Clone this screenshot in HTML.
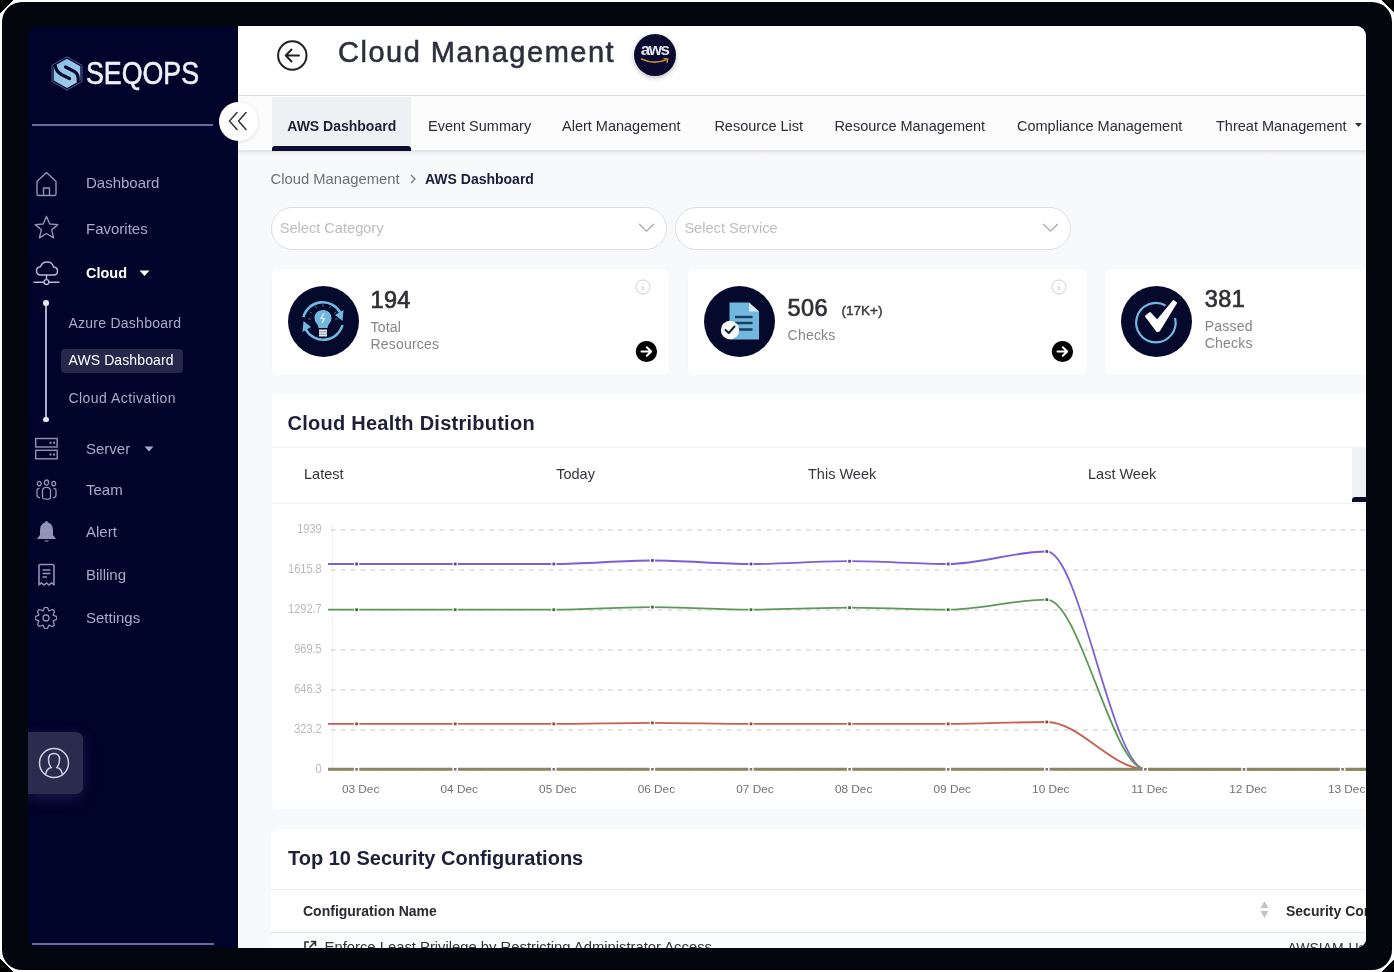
<!DOCTYPE html><html><head><meta charset="utf-8"><style>
*{margin:0;padding:0;box-sizing:border-box}
html,body{width:1394px;height:972px;overflow:hidden;background:#fff;font-family:'Liberation Sans',sans-serif}
.t{position:absolute;white-space:nowrap}
.a{position:absolute}
</style></head><body><div class="a" style="left:0;top:0;width:1394px;height:972px;filter:blur(0.4px)"><div class="a" style="left:0;top:0;width:1394px;height:972px;background:#fff"></div>
<svg class="a" style="left:0px;top:0px" width="14" height="14"><polygon points="0,0 13,0 0,13" fill="#000" shape-rendering="crispEdges"/></svg>
<svg class="a" style="left:1380px;top:0px" width="14" height="14"><polygon points="1,0 14,0 14,13" fill="#000" shape-rendering="crispEdges"/></svg>
<svg class="a" style="left:0px;top:958px" width="14" height="14"><polygon points="0,1 13,14 0,14" fill="#000" shape-rendering="crispEdges"/></svg>
<svg class="a" style="left:1380px;top:958px" width="14" height="14"><polygon points="14,1 14,14 1,14" fill="#000" shape-rendering="crispEdges"/></svg>
<div class="a" style="left:2px;top:2px;width:1390px;height:968px;background:#04060e;border-radius:20px"></div>
<div class="a" id="inner" style="left:28px;top:26px;width:1338px;height:922px;background:#04060e;border-radius:10px;overflow:hidden">
<div class="a" style="left:-28px;top:-26px;width:1394px;height:972px">
<div class="a" style="left:237px;top:26px;width:1129px;height:922px;background:#f8f9fb"></div>
<div class="a" style="left:28px;top:26px;width:210px;height:922px;background:#00032a"></div>
<svg class="a" style="left:51px;top:56px" width="32" height="35" viewBox="0 0 32 35">
<defs><linearGradient id="lg1" x1="0" y1="0" x2="1" y2="1"><stop offset="0" stop-color="#86bfe6"/><stop offset="1" stop-color="#a6cdea"/></linearGradient></defs>
<polygon points="16,0.8 31,9.3 31,25.5 16,34 1,25.5 1,9.3" fill="url(#lg1)" stroke="#03082c" stroke-width="3.4"/><polygon points="16,0.8 31,9.3 31,25.5 16,34 1,25.5 1,9.3" fill="none" stroke="#5a5c98" stroke-width="0.9"/>
<path d="M4.2,9.5 C4.8,14 6.5,16.2 10.5,18.6 L18.5,22.5" fill="none" stroke="#03082c" stroke-width="3.2" stroke-linecap="round"/>
<path d="M14.6,11 L23.5,15.6 C26.8,17.6 27.6,20 27.2,25" fill="none" stroke="#03082c" stroke-width="3.2" stroke-linecap="round"/>
</svg>
<div class="t" style="left:86px;top:58.14px;font-size:31.5px;line-height:31.5px;font-weight:400;color:#eef0fa;letter-spacing:0px;font-family:'Liberation Sans',sans-serif;transform:scaleX(0.85);transform-origin:0 0;-webkit-text-stroke:0.6px #eef0fa;">SEQOPS</div>
<div class="a" style="left:32px;top:123.5px;width:181px;height:2px;background:#6a6b9b"></div>
<div class="t" style="left:86px;top:175.30px;font-size:15px;line-height:15px;font-weight:400;color:#aaabc9;font-family:'Liberation Sans',sans-serif;">Dashboard</div>
<div class="t" style="left:86px;top:221.30px;font-size:15px;line-height:15px;font-weight:400;color:#aaabc9;font-family:'Liberation Sans',sans-serif;">Favorites</div>
<div class="t" style="left:86px;top:266.23px;font-size:14.5px;line-height:14.5px;font-weight:700;color:#ffffff;font-family:'Liberation Sans',sans-serif;">Cloud</div>
<div class="t" style="left:86px;top:441.30px;font-size:15px;line-height:15px;font-weight:400;color:#aaabc9;font-family:'Liberation Sans',sans-serif;">Server</div>
<div class="t" style="left:86px;top:482.30px;font-size:15px;line-height:15px;font-weight:400;color:#aaabc9;font-family:'Liberation Sans',sans-serif;">Team</div>
<div class="t" style="left:86px;top:524.30px;font-size:15px;line-height:15px;font-weight:400;color:#aaabc9;font-family:'Liberation Sans',sans-serif;">Alert</div>
<div class="t" style="left:86px;top:567.30px;font-size:15px;line-height:15px;font-weight:400;color:#aaabc9;font-family:'Liberation Sans',sans-serif;">Billing</div>
<div class="t" style="left:86px;top:609.80px;font-size:15px;line-height:15px;font-weight:400;color:#aaabc9;font-family:'Liberation Sans',sans-serif;">Settings</div>
<svg class="a" style="left:139px;top:270px" width="11" height="7"><polygon points="0.5,0.5 10.5,0.5 5.5,6" fill="#fff"/></svg>
<svg class="a" style="left:144px;top:446px" width="10" height="6"><polygon points="0.5,0.5 9.5,0.5 5,5.5" fill="#aaabc9"/></svg>
<svg class="a" style="left:34px;top:170px" width="26" height="28" viewBox="0 0 26 28" fill="none" stroke="#9293bb" stroke-width="1.4" stroke-linejoin="round">
<path d="M3,11.5 L12.5,2.5 L22,11.5 L22,24 Q22,25.5 20.5,25.5 L4.5,25.5 Q3,25.5 3,24 Z"/><path d="M9.5,25.5 V18 H15.5 V25.5"/></svg>
<svg class="a" style="left:33px;top:215px" width="27" height="26" viewBox="0 0 27 26" fill="none" stroke="#9293bb" stroke-width="1.4" stroke-linejoin="round">
<polygon points="13.5,1.5 16.8,9 24.8,9.6 18.7,14.8 20.6,22.8 13.5,18.5 6.4,22.8 8.3,14.8 2.2,9.6 10.2,9"/></svg>
<svg class="a" style="left:33px;top:260px" width="28" height="28" viewBox="0 0 28 28" fill="none" stroke="#b9bad6" stroke-width="1.4" stroke-linejoin="round">
<path d="M8,15 Q3.5,15 3.5,10.8 Q3.5,7 7.5,6.8 Q9,2 14,2 Q19.5,2 20.5,7 Q24.5,7.2 24.5,11 Q24.5,15 20.5,15 Z"/><path d="M13.5,15 V19.5"/><circle cx="13.5" cy="22" r="2.4"/><path d="M0.5,22.3 H11 M16,22.3 H26.5"/></svg>
<div class="a" style="left:45.3px;top:303px;width:1.5px;height:116px;background:#a9abd0"></div>
<div class="a" style="left:43.3px;top:300px;width:5.5px;height:5.5px;border-radius:50%;background:#e6e6f4"></div>
<div class="a" style="left:43.3px;top:416.5px;width:5.5px;height:5.5px;border-radius:50%;background:#e6e6f4"></div>
<div class="a" style="left:60.5px;top:348.5px;width:122px;height:24.5px;border-radius:4px;background:#25284a"></div>
<div class="t" style="left:68.5px;top:315.65px;font-size:14px;line-height:14px;font-weight:400;color:#aaabc9;letter-spacing:0.25px;font-family:'Liberation Sans',sans-serif;">Azure Dashboard</div>
<div class="t" style="left:68.5px;top:352.65px;font-size:14px;line-height:14px;font-weight:400;color:#ffffff;letter-spacing:0.1px;font-family:'Liberation Sans',sans-serif;">AWS Dashboard</div>
<div class="t" style="left:68.5px;top:390.65px;font-size:14px;line-height:14px;font-weight:400;color:#aaabc9;letter-spacing:0.45px;font-family:'Liberation Sans',sans-serif;">Cloud Activation</div>
<svg class="a" style="left:34px;top:437px" width="25" height="24" viewBox="0 0 25 24" fill="none" stroke="#9293bb" stroke-width="1.4">
<rect x="1.7" y="1.5" width="21.5" height="8.5"/><rect x="1.7" y="13.3" width="21.5" height="8.5"/><path d="M15.5,5.8 h2 M19,5.8 h2 M15.5,17.6 h2 M19,17.6 h2" stroke-width="2"/></svg>
<svg class="a" style="left:35px;top:479px" width="23" height="22" viewBox="0 0 23 22" fill="none" stroke="#9293bb" stroke-width="1.3">
<ellipse cx="11.5" cy="3.6" rx="2.1" ry="2.6"/><ellipse cx="4.3" cy="4.6" rx="1.9" ry="2.3"/><ellipse cx="18.7" cy="4.6" rx="1.9" ry="2.3"/>
<path d="M7.5,18.5 V11.5 Q7.5,8.3 11.5,8.3 Q15.5,8.3 15.5,11.5 V18.5 Q15.5,20.2 11.5,20.2 Q7.5,20.2 7.5,18.5 Z"/><path d="M5,18.8 Q2,18.5 2,16 V11.5 Q2,9.3 4.5,9.3"/><path d="M18,18.8 Q21,18.5 21,16 V11.5 Q21,9.3 18.5,9.3"/></svg>
<svg class="a" style="left:36px;top:520px" width="21" height="23" viewBox="0 0 21 23">
<path d="M10.5,1 Q12,1 12,2.5 Q17,4 17,10 V15 L20,19 H1 L4,15 V10 Q4,4 9,2.5 Q9,1 10.5,1 Z" fill="#9293bb"/><path d="M8,20.5 Q10.5,23 13,20.5 Z" fill="#9293bb"/></svg>
<svg class="a" style="left:37px;top:563px" width="19" height="24" viewBox="0 0 19 24" fill="none" stroke="#9293bb" stroke-width="1.6">
<path d="M2,3 Q2,1.5 3.5,1.5 H15.5 Q17,1.5 17,3 V21.5 L14.5,20 L12,22 L9.5,20 L7,22 L4.5,20 L2,21.5 Z"/><path d="M5.5,7 H13.5 M5.5,10.5 H13.5 M5.5,14 H10" stroke-width="1.4"/></svg>
<svg class="a" style="left:35px;top:606.5px" width="22" height="22" viewBox="0 0 22 22" fill="none" stroke="#9293bb" stroke-width="1.3" stroke-linejoin="round">
<path d="M18.11,8.05 L21.72,9.68 L21.72,12.32 L18.11,13.95 L19.51,17.65 L17.65,19.51 L13.95,18.11 L12.32,21.72 L9.68,21.72 L8.05,18.11 L4.35,19.51 L2.49,17.65 L3.89,13.95 L0.28,12.32 L0.28,9.68 L3.89,8.05 L2.49,4.35 L4.35,2.49 L8.05,3.89 L9.68,0.28 L12.32,0.28 L13.95,3.89 L17.65,2.49 L19.51,4.35 Z"/><circle cx="11" cy="11" r="3"/></svg>
<div class="a" style="left:28px;top:732px;width:55px;height:62px;border-radius:0 7px 7px 0;background:#2a2c4d;box-shadow:0 4px 14px rgba(70,72,130,0.35)"></div>
<svg class="a" style="left:38px;top:747px" width="32" height="32" viewBox="0 0 32 32" fill="none" stroke="#d0d1e6" stroke-width="1.5">
<circle cx="16" cy="16" r="14.5"/><path d="M7.5,27.5 Q8.5,21.5 13,20.5 Q10.5,17.5 10.5,12.5 Q10.5,6.5 16,6.5 Q21.5,6.5 21.5,12.5 Q21.5,17.5 19,20.5 Q23.5,21.5 24.5,27.5"/></svg>
<div class="a" style="left:32px;top:943px;width:182px;height:2px;background:#6a6b9b"></div>
<div class="a" style="left:238px;top:26px;width:1128px;height:69px;background:#ffffff"></div>
<div class="a" style="left:238px;top:94.5px;width:1128px;height:1px;background:#d9d9dc"></div>
<div class="a" style="left:238px;top:95.5px;width:1128px;height:55px;background:#fcfcfd"></div>
<div class="a" style="left:238px;top:150px;width:1128px;height:1.5px;background:#e4e4e9"></div>
<div class="a" style="left:238px;top:151.5px;width:1128px;height:4px;background:linear-gradient(#eeeef2,#f8f9fb)"></div>
<svg class="a" style="left:276px;top:39px" width="33" height="33" viewBox="0 0 33 33" fill="none" stroke="#222" stroke-width="2" stroke-linecap="round" stroke-linejoin="round">
<circle cx="16.3" cy="16.5" r="14.2"/><path d="M10,16.5 H23 M15.5,10.5 L9.8,16.5 L15.5,22.5"/></svg>
<div class="t" style="left:338px;top:37.85px;font-size:29px;line-height:29px;font-weight:400;color:#2c2f3c;letter-spacing:1.5px;font-family:'Liberation Sans',sans-serif;-webkit-text-stroke:0.55px #2c2f3c;">Cloud Management</div>
<div class="a" style="left:633.5px;top:34.3px;width:42px;height:42px;border-radius:50%;background:#0a0b2e;box-shadow:0 2px 5px rgba(0,0,0,0.25)"></div>
<div class="t" style="left:654.6px;transform:translateX(-50%);top:41.41px;font-size:17px;line-height:17px;font-weight:700;color:#e4e6f2;letter-spacing:-1.5px;font-family:'Liberation Sans',sans-serif;">aws</div>
<svg class="a" style="left:640px;top:56px" width="30" height="10" viewBox="0 0 30 10" fill="none">
<path d="M1.5,3 Q14,9 27,3.5" stroke="#c08a3a" stroke-width="1.6" stroke-linecap="round"/><path d="M24,2.5 L27.8,3 L27,6.5" stroke="#c08a3a" stroke-width="1.4" stroke-linecap="round"/></svg>
<div class="a" style="left:272px;top:97px;width:139px;height:50px;background:#eff0f3"></div>
<div class="a" style="left:272px;top:146px;width:139px;height:5px;background:#0b0c2e;border-radius:3px 3px 0 0"></div>
<div class="t" style="left:287.3px;top:119.35px;font-size:14px;line-height:14px;font-weight:700;color:#1e2038;font-family:'Liberation Sans',sans-serif;">AWS Dashboard</div>
<div class="t" style="left:428px;top:118.93px;font-size:14.5px;line-height:14.5px;font-weight:400;color:#2c2c34;font-family:'Liberation Sans',sans-serif;">Event Summary</div>
<div class="t" style="left:562px;top:118.93px;font-size:14.5px;line-height:14.5px;font-weight:400;color:#2c2c34;font-family:'Liberation Sans',sans-serif;">Alert Management</div>
<div class="t" style="left:714.4px;top:118.93px;font-size:14.5px;line-height:14.5px;font-weight:400;color:#2c2c34;font-family:'Liberation Sans',sans-serif;">Resource List</div>
<div class="t" style="left:834.4px;top:118.93px;font-size:14.5px;line-height:14.5px;font-weight:400;color:#2c2c34;font-family:'Liberation Sans',sans-serif;">Resource Management</div>
<div class="t" style="left:1017px;top:118.93px;font-size:14.5px;line-height:14.5px;font-weight:400;color:#2c2c34;font-family:'Liberation Sans',sans-serif;">Compliance Management</div>
<div class="t" style="left:1216px;top:118.93px;font-size:14.5px;line-height:14.5px;font-weight:400;color:#2c2c34;font-family:'Liberation Sans',sans-serif;">Threat Management</div>
<svg class="a" style="left:1355px;top:123px" width="8" height="5"><polygon points="0,0 7,0 3.5,4" fill="#333"/></svg>
<div class="a" style="left:218.5px;top:101.5px;width:39px;height:39px;border-radius:50%;background:#fff;box-shadow:0 1px 4px rgba(0,0,0,0.12)"></div>
<svg class="a" style="left:226px;top:110px" width="24" height="22" viewBox="0 0 24 22" fill="none" stroke="#333" stroke-width="1.5" stroke-linecap="round" stroke-linejoin="round">
<path d="M11,2.5 L3.5,11 L11,19.5 M20,2.5 L12.5,11 L20,19.5"/></svg>
<div class="t" style="left:270.5px;top:171.67px;font-size:14.8px;line-height:14.8px;font-weight:400;color:#6e6e73;font-family:'Liberation Sans',sans-serif;">Cloud Management</div>
<svg class="a" style="left:408px;top:173px" width="10" height="12" viewBox="0 0 10 12" fill="none" stroke="#777" stroke-width="1.3"><path d="M3,2 L7,6 L3,10"/></svg>
<div class="t" style="left:425px;top:172.35px;font-size:14px;line-height:14px;font-weight:700;color:#1a1c38;font-family:'Liberation Sans',sans-serif;">AWS Dashboard</div>
<div class="a" style="left:270.5px;top:206.5px;width:396.5px;height:43.5px;border-radius:22px;background:#fff;border:1.4px solid #dcdcdf"></div>
<div class="t" style="left:279.7px;top:220.94px;font-size:14.6px;line-height:14.6px;font-weight:400;color:#bdbdc2;font-family:'Liberation Sans',sans-serif;">Select Category</div>
<svg class="a" style="left:637.5px;top:222px" width="17" height="12" viewBox="0 0 17 12" fill="none" stroke="#a9a9ae" stroke-width="1.3" stroke-linecap="round"><path d="M1.5,2.2 L8.5,9.2 L15.5,2.2"/></svg>
<div class="a" style="left:675.2px;top:206.5px;width:395.5px;height:43.5px;border-radius:22px;background:#fff;border:1.4px solid #dcdcdf"></div>
<div class="t" style="left:684.4000000000001px;top:220.94px;font-size:14.6px;line-height:14.6px;font-weight:400;color:#bdbdc2;font-family:'Liberation Sans',sans-serif;">Select Service</div>
<svg class="a" style="left:1042px;top:222px" width="17" height="12" viewBox="0 0 17 12" fill="none" stroke="#a9a9ae" stroke-width="1.3" stroke-linecap="round"><path d="M1.5,2.2 L8.5,9.2 L15.5,2.2"/></svg>
<div class="a" style="left:271.6px;top:268.5px;width:397.7px;height:106px;border-radius:6px;background:#fff;box-shadow:0 0 2px rgba(0,0,0,0.03)"></div>
<div class="a" style="left:688.4px;top:268.5px;width:398.3px;height:106px;border-radius:6px;background:#fff;box-shadow:0 0 2px rgba(0,0,0,0.03)"></div>
<div class="a" style="left:1104.7px;top:268.5px;width:400px;height:106px;border-radius:6px;background:#fff;box-shadow:0 0 2px rgba(0,0,0,0.03)"></div>
<div class="a" style="left:287.5px;top:285.5px;width:71px;height:71px;border-radius:50%;background:#050a2c"></div>
<div class="a" style="left:703.5px;top:285.5px;width:71px;height:71px;border-radius:50%;background:#050a2c"></div>
<div class="a" style="left:1120.9px;top:285.5px;width:71px;height:71px;border-radius:50%;background:#050a2c"></div>
<svg class="a" style="left:293px;top:291px" width="60" height="60" viewBox="0 0 60 60" fill="none">
<path d="M10.5,26 A20,20 0 0 1 47.5,22" stroke="#72b8de" stroke-width="2.6"/>
<polygon points="50.5,19 49.5,30 42,24" fill="#72b8de"/>
<path d="M49.5,34 A20,20 0 0 1 12.5,38" stroke="#72b8de" stroke-width="2.6"/>
<polygon points="9.5,41 10.5,30 18,36" fill="#72b8de"/>
<path d="M30,19 C24.5,19 21.5,23 21.5,27 C21.5,30.5 23.5,32 25,34.5 L25.5,37 H34.5 L35,34.5 C36.5,32 38.5,30.5 38.5,27 C38.5,23 35.5,19 30,19 Z" fill="#72b8de"/>
<path d="M31,22.5 L28,27.5 H31.5 L29,32" stroke="#e6f4fb" stroke-width="1.2"/>
<rect x="26" y="38.5" width="8" height="7" fill="#e8e8ee"/><path d="M26,40.8 H34 M26,43.2 H34" stroke="#7a7a8a" stroke-width="0.8"/>
<g stroke="#7fa9c8" stroke-width="1" stroke-linecap="round" opacity="0.6"><path d="M30,13.5 V15.5 M22.5,15.5 L23.5,17 M37.5,15.5 L36.5,17 M17,21 L18.5,22 M43,21 L41.5,22 M15.5,28 H17.5 M44.5,28 H42.5"/></g>
</svg>
<svg class="a" style="left:709px;top:291px" width="60" height="60" viewBox="0 0 60 60" fill="none">
<path d="M20.5,11.5 H40 L50,20.5 V48.5 H20.5 Z" fill="#72b8de"/>
<path d="M40,11.5 L50,20.5 H40 Z" fill="#d7ecf7"/>
<path d="M26,26 H43.5 M26,32 H43.5 M26,38.5 H43.5" stroke="#1b3d5e" stroke-width="2.6"/>
<circle cx="21" cy="39" r="9.2" fill="#fbfbfd"/>
<path d="M16.5,39 L19.8,42 L25.5,35.5" stroke="#222" stroke-width="2" stroke-linecap="round" stroke-linejoin="round"/>
</svg>
<svg class="a" style="left:1126.4px;top:291px" width="60" height="60" viewBox="0 0 60 60" fill="none">
<path d="M39.5,14.5 A19.7,19.7 0 1 0 49,27" stroke="#72b8de" stroke-width="2.2"/>
<path d="M19.8,25.2 L24,21.8 L31.2,29.5 L47.5,9.8 L50.3,11.8 L33.2,39.8 L31,40.2 Z" fill="#fff" stroke="#fff" stroke-width="1.5" stroke-linejoin="round"/>
</svg>
<div class="t" style="left:370.5px;top:288.91px;font-size:23.5px;line-height:23.5px;font-weight:400;color:#2f3036;letter-spacing:0.35px;font-family:'Liberation Sans',sans-serif;-webkit-text-stroke:0.7px #2f3036;">194</div>
<div class="t" style="left:370.5px;top:319.55px;font-size:14px;line-height:14px;font-weight:400;color:#85858b;letter-spacing:0.2px;font-family:'Liberation Sans',sans-serif;">Total</div>
<div class="t" style="left:370.5px;top:337.05px;font-size:14px;line-height:14px;font-weight:400;color:#85858b;letter-spacing:0.2px;font-family:'Liberation Sans',sans-serif;">Resources</div>
<div class="t" style="left:787.6px;top:297.01px;font-size:23.5px;line-height:23.5px;font-weight:400;color:#2f3036;letter-spacing:0.35px;font-family:'Liberation Sans',sans-serif;-webkit-text-stroke:0.7px #2f3036;">506</div>
<div class="t" style="left:841.5px;top:304.27px;font-size:13.5px;line-height:13.5px;font-weight:400;color:#3a3a3f;font-family:'Liberation Sans',sans-serif;-webkit-text-stroke:0.45px #3a3a3f;">(17K+)</div>
<div class="t" style="left:787.6px;top:327.95px;font-size:14px;line-height:14px;font-weight:400;color:#85858b;letter-spacing:0.2px;font-family:'Liberation Sans',sans-serif;">Checks</div>
<div class="t" style="left:1204.8px;top:287.91px;font-size:23.5px;line-height:23.5px;font-weight:400;color:#2f3036;letter-spacing:0.35px;font-family:'Liberation Sans',sans-serif;-webkit-text-stroke:0.7px #2f3036;">381</div>
<div class="t" style="left:1204.8px;top:318.95px;font-size:14px;line-height:14px;font-weight:400;color:#85858b;letter-spacing:0.2px;font-family:'Liberation Sans',sans-serif;">Passed</div>
<div class="t" style="left:1204.8px;top:336.35px;font-size:14px;line-height:14px;font-weight:400;color:#85858b;letter-spacing:0.2px;font-family:'Liberation Sans',sans-serif;">Checks</div>
<svg class="a" style="left:634.5px;top:278.7px" width="16" height="16" viewBox="0 0 16 16" fill="none" stroke="#cfcfd3" stroke-width="1"><circle cx="8" cy="8" r="7"/><path d="M8,7 V11.5 M8,4.5 V5.5" stroke-width="1.3"/></svg>
<svg class="a" style="left:635px;top:339.7px" width="23" height="23" viewBox="0 0 23 23"><circle cx="11.5" cy="11.5" r="10.6" fill="#000"/>
<path d="M6.5,11.5 H16 M11.8,7.2 L16.2,11.5 L11.8,15.8" fill="none" stroke="#fff" stroke-width="2" stroke-linecap="round" stroke-linejoin="round"/></svg>
<svg class="a" style="left:1050.5px;top:278.7px" width="16" height="16" viewBox="0 0 16 16" fill="none" stroke="#cfcfd3" stroke-width="1"><circle cx="8" cy="8" r="7"/><path d="M8,7 V11.5 M8,4.5 V5.5" stroke-width="1.3"/></svg>
<svg class="a" style="left:1051.4px;top:339.7px" width="23" height="23" viewBox="0 0 23 23"><circle cx="11.5" cy="11.5" r="10.6" fill="#000"/>
<path d="M6.5,11.5 H16 M11.8,7.2 L16.2,11.5 L11.8,15.8" fill="none" stroke="#fff" stroke-width="2" stroke-linecap="round" stroke-linejoin="round"/></svg>
<div class="a" style="left:272px;top:394.4px;width:1200px;height:414.6px;border-radius:6px;background:#fff"></div>
<div class="t" style="left:287.5px;top:413.27px;font-size:20px;line-height:20px;font-weight:700;color:#1d2038;letter-spacing:0.25px;font-family:'Liberation Sans',sans-serif;">Cloud Health Distribution</div>
<div class="a" style="left:272px;top:446.5px;width:1100px;height:1px;background:#f0f0f2"></div>
<div class="a" style="left:272px;top:502.8px;width:1100px;height:1px;background:#f0f0f2"></div>
<div class="a" style="left:1351.6px;top:448px;width:40px;height:48.5px;background:#f0f1f5"></div>
<div class="a" style="left:1351.6px;top:496.5px;width:40px;height:5px;background:#0b0c2e;border-radius:3px 0 0 0"></div>
<div class="t" style="left:304px;top:467.13px;font-size:14.5px;line-height:14.5px;font-weight:400;color:#34343c;font-family:'Liberation Sans',sans-serif;">Latest</div>
<div class="t" style="left:556.2px;top:467.13px;font-size:14.5px;line-height:14.5px;font-weight:400;color:#34343c;font-family:'Liberation Sans',sans-serif;">Today</div>
<div class="t" style="left:808px;top:467.13px;font-size:14.5px;line-height:14.5px;font-weight:400;color:#34343c;font-family:'Liberation Sans',sans-serif;">This Week</div>
<div class="t" style="left:1088px;top:467.13px;font-size:14.5px;line-height:14.5px;font-weight:400;color:#34343c;font-family:'Liberation Sans',sans-serif;">Last Week</div>
<svg class="a" style="left:0;top:0" width="1394" height="972" viewBox="0 0 1394 972" fill="none"><path d="M332.5,524 V770" stroke="#f1f1f8" stroke-width="1"/><path d="M326,530.0 H1394" stroke="#c6c6ca" stroke-width="1" stroke-dasharray="4.6,5.3" stroke-dashoffset="5"/><path d="M326,570.0 H1394" stroke="#c6c6ca" stroke-width="1" stroke-dasharray="4.6,5.3" stroke-dashoffset="5"/><path d="M326,610.0 H1394" stroke="#c6c6ca" stroke-width="1" stroke-dasharray="4.6,5.3" stroke-dashoffset="5"/><path d="M326,650.0 H1394" stroke="#c6c6ca" stroke-width="1" stroke-dasharray="4.6,5.3" stroke-dashoffset="5"/><path d="M326,690.0 H1394" stroke="#c6c6ca" stroke-width="1" stroke-dasharray="4.6,5.3" stroke-dashoffset="5"/><path d="M326,730.0 H1394" stroke="#c6c6ca" stroke-width="1" stroke-dasharray="4.6,5.3" stroke-dashoffset="5"/><path d="M326,770.0 H1394" stroke="#c6c6ca" stroke-width="1" stroke-dasharray="4.6,5.3" stroke-dashoffset="5"/><path d="M328,564.00 L356.60,564.00 C389.47,564.00 422.33,564.00 455.20,564.00 C488.07,564.00 520.93,564.00 553.80,564.00 C586.67,564.00 619.53,560.50 652.40,560.50 C685.27,560.50 718.13,564.00 751.00,564.00 C783.87,564.00 816.73,561.20 849.60,561.20 C882.47,561.20 915.33,564.00 948.20,564.00 C981.07,564.00 1013.93,551.50 1046.80,551.50 C1079.67,551.50 1112.53,769.30 1145.40,769.30 C1178.27,769.30 1211.13,769.30 1244.00,769.30 C1276.87,769.30 1309.73,769.30 1342.60,769.30 L1400,769.30" stroke="#7c5fd6" stroke-width="1.8"/><rect x="354.60" y="562.00" width="4" height="4" fill="#5a42a8" stroke="#fff" stroke-width="1.2"/><rect x="453.20" y="562.00" width="4" height="4" fill="#5a42a8" stroke="#fff" stroke-width="1.2"/><rect x="551.80" y="562.00" width="4" height="4" fill="#5a42a8" stroke="#fff" stroke-width="1.2"/><rect x="650.40" y="558.50" width="4" height="4" fill="#5a42a8" stroke="#fff" stroke-width="1.2"/><rect x="749.00" y="562.00" width="4" height="4" fill="#5a42a8" stroke="#fff" stroke-width="1.2"/><rect x="847.60" y="559.20" width="4" height="4" fill="#5a42a8" stroke="#fff" stroke-width="1.2"/><rect x="946.20" y="562.00" width="4" height="4" fill="#5a42a8" stroke="#fff" stroke-width="1.2"/><rect x="1044.80" y="549.50" width="4" height="4" fill="#5a42a8" stroke="#fff" stroke-width="1.2"/><path d="M328,609.70 L356.60,609.70 C389.47,609.70 422.33,609.70 455.20,609.70 C488.07,609.70 520.93,609.70 553.80,609.70 C586.67,609.70 619.53,607.10 652.40,607.10 C685.27,607.10 718.13,609.70 751.00,609.70 C783.87,609.70 816.73,607.70 849.60,607.70 C882.47,607.70 915.33,609.70 948.20,609.70 C981.07,609.70 1013.93,599.60 1046.80,599.60 C1079.67,599.60 1112.53,769.30 1145.40,769.30 C1178.27,769.30 1211.13,769.30 1244.00,769.30 C1276.87,769.30 1309.73,769.30 1342.60,769.30 L1400,769.30" stroke="#5b9a55" stroke-width="1.8"/><rect x="354.60" y="607.70" width="4" height="4" fill="#3a6e38" stroke="#fff" stroke-width="1.2"/><rect x="453.20" y="607.70" width="4" height="4" fill="#3a6e38" stroke="#fff" stroke-width="1.2"/><rect x="551.80" y="607.70" width="4" height="4" fill="#3a6e38" stroke="#fff" stroke-width="1.2"/><rect x="650.40" y="605.10" width="4" height="4" fill="#3a6e38" stroke="#fff" stroke-width="1.2"/><rect x="749.00" y="607.70" width="4" height="4" fill="#3a6e38" stroke="#fff" stroke-width="1.2"/><rect x="847.60" y="605.70" width="4" height="4" fill="#3a6e38" stroke="#fff" stroke-width="1.2"/><rect x="946.20" y="607.70" width="4" height="4" fill="#3a6e38" stroke="#fff" stroke-width="1.2"/><rect x="1044.80" y="597.60" width="4" height="4" fill="#3a6e38" stroke="#fff" stroke-width="1.2"/><path d="M328,723.90 L356.60,723.90 C389.47,723.90 422.33,723.90 455.20,723.90 C488.07,723.90 520.93,723.90 553.80,723.90 C586.67,723.90 619.53,722.90 652.40,722.90 C685.27,722.90 718.13,723.90 751.00,723.90 C783.87,723.90 816.73,723.90 849.60,723.90 C882.47,723.90 915.33,723.90 948.20,723.90 C981.07,723.90 1013.93,722.00 1046.80,722.00 C1079.67,722.00 1112.53,769.30 1145.40,769.30 C1178.27,769.30 1211.13,769.30 1244.00,769.30 C1276.87,769.30 1309.73,769.30 1342.60,769.30 L1400,769.30" stroke="#c8604f" stroke-width="1.8"/><rect x="354.60" y="721.90" width="4" height="4" fill="#9a4436" stroke="#fff" stroke-width="1.2"/><rect x="453.20" y="721.90" width="4" height="4" fill="#9a4436" stroke="#fff" stroke-width="1.2"/><rect x="551.80" y="721.90" width="4" height="4" fill="#9a4436" stroke="#fff" stroke-width="1.2"/><rect x="650.40" y="720.90" width="4" height="4" fill="#9a4436" stroke="#fff" stroke-width="1.2"/><rect x="749.00" y="721.90" width="4" height="4" fill="#9a4436" stroke="#fff" stroke-width="1.2"/><rect x="847.60" y="721.90" width="4" height="4" fill="#9a4436" stroke="#fff" stroke-width="1.2"/><rect x="946.20" y="721.90" width="4" height="4" fill="#9a4436" stroke="#fff" stroke-width="1.2"/><rect x="1044.80" y="720.00" width="4" height="4" fill="#9a4436" stroke="#fff" stroke-width="1.2"/><path d="M328,769.3 H1394" stroke="#8a8660" stroke-width="3"/><rect x="354.60" y="767.30" width="4" height="4" fill="#77776a" stroke="#fff" stroke-width="1.4"/><rect x="453.20" y="767.30" width="4" height="4" fill="#77776a" stroke="#fff" stroke-width="1.4"/><rect x="551.80" y="767.30" width="4" height="4" fill="#77776a" stroke="#fff" stroke-width="1.4"/><rect x="650.40" y="767.30" width="4" height="4" fill="#77776a" stroke="#fff" stroke-width="1.4"/><rect x="749.00" y="767.30" width="4" height="4" fill="#77776a" stroke="#fff" stroke-width="1.4"/><rect x="847.60" y="767.30" width="4" height="4" fill="#77776a" stroke="#fff" stroke-width="1.4"/><rect x="946.20" y="767.30" width="4" height="4" fill="#77776a" stroke="#fff" stroke-width="1.4"/><rect x="1044.80" y="767.30" width="4" height="4" fill="#77776a" stroke="#fff" stroke-width="1.4"/><rect x="1143.40" y="767.30" width="4" height="4" fill="#77776a" stroke="#fff" stroke-width="1.4"/><rect x="1242.00" y="767.30" width="4" height="4" fill="#77776a" stroke="#fff" stroke-width="1.4"/><rect x="1340.60" y="767.30" width="4" height="4" fill="#77776a" stroke="#fff" stroke-width="1.4"/></svg>
<div class="t" style="right:1072.3px;top:524.29px;font-size:11px;line-height:11px;font-weight:400;color:#b9b9be;font-family:'Liberation Sans',sans-serif;transform:scaleY(1.12);transform-origin:0 80%;">1939</div>
<div class="t" style="right:1072.3px;top:564.29px;font-size:11px;line-height:11px;font-weight:400;color:#b9b9be;font-family:'Liberation Sans',sans-serif;transform:scaleY(1.12);transform-origin:0 80%;">1615.8</div>
<div class="t" style="right:1072.3px;top:604.29px;font-size:11px;line-height:11px;font-weight:400;color:#b9b9be;font-family:'Liberation Sans',sans-serif;transform:scaleY(1.12);transform-origin:0 80%;">1292.7</div>
<div class="t" style="right:1072.3px;top:644.29px;font-size:11px;line-height:11px;font-weight:400;color:#b9b9be;font-family:'Liberation Sans',sans-serif;transform:scaleY(1.12);transform-origin:0 80%;">969.5</div>
<div class="t" style="right:1072.3px;top:684.29px;font-size:11px;line-height:11px;font-weight:400;color:#b9b9be;font-family:'Liberation Sans',sans-serif;transform:scaleY(1.12);transform-origin:0 80%;">646.3</div>
<div class="t" style="right:1072.3px;top:724.29px;font-size:11px;line-height:11px;font-weight:400;color:#b9b9be;font-family:'Liberation Sans',sans-serif;transform:scaleY(1.12);transform-origin:0 80%;">323.2</div>
<div class="t" style="right:1072.3px;top:764.29px;font-size:11px;line-height:11px;font-weight:400;color:#b9b9be;font-family:'Liberation Sans',sans-serif;transform:scaleY(1.12);transform-origin:0 80%;">0</div>
<div class="t" style="left:360.6px;transform:translateX(-50%);top:783.51px;font-size:11.8px;line-height:11.8px;font-weight:400;color:#707077;font-family:'Liberation Sans',sans-serif;">03 Dec</div>
<div class="t" style="left:459.20000000000005px;transform:translateX(-50%);top:783.51px;font-size:11.8px;line-height:11.8px;font-weight:400;color:#707077;font-family:'Liberation Sans',sans-serif;">04 Dec</div>
<div class="t" style="left:557.8px;transform:translateX(-50%);top:783.51px;font-size:11.8px;line-height:11.8px;font-weight:400;color:#707077;font-family:'Liberation Sans',sans-serif;">05 Dec</div>
<div class="t" style="left:656.4px;transform:translateX(-50%);top:783.51px;font-size:11.8px;line-height:11.8px;font-weight:400;color:#707077;font-family:'Liberation Sans',sans-serif;">06 Dec</div>
<div class="t" style="left:755.0px;transform:translateX(-50%);top:783.51px;font-size:11.8px;line-height:11.8px;font-weight:400;color:#707077;font-family:'Liberation Sans',sans-serif;">07 Dec</div>
<div class="t" style="left:853.6px;transform:translateX(-50%);top:783.51px;font-size:11.8px;line-height:11.8px;font-weight:400;color:#707077;font-family:'Liberation Sans',sans-serif;">08 Dec</div>
<div class="t" style="left:952.1999999999999px;transform:translateX(-50%);top:783.51px;font-size:11.8px;line-height:11.8px;font-weight:400;color:#707077;font-family:'Liberation Sans',sans-serif;">09 Dec</div>
<div class="t" style="left:1050.8px;transform:translateX(-50%);top:783.51px;font-size:11.8px;line-height:11.8px;font-weight:400;color:#707077;font-family:'Liberation Sans',sans-serif;">10 Dec</div>
<div class="t" style="left:1149.4px;transform:translateX(-50%);top:783.51px;font-size:11.8px;line-height:11.8px;font-weight:400;color:#707077;font-family:'Liberation Sans',sans-serif;">11 Dec</div>
<div class="t" style="left:1248.0px;transform:translateX(-50%);top:783.51px;font-size:11.8px;line-height:11.8px;font-weight:400;color:#707077;font-family:'Liberation Sans',sans-serif;">12 Dec</div>
<div class="t" style="left:1346.6px;transform:translateX(-50%);top:783.51px;font-size:11.8px;line-height:11.8px;font-weight:400;color:#707077;font-family:'Liberation Sans',sans-serif;">13 Dec</div>
<div class="a" style="left:271px;top:828.7px;width:1200px;height:200px;border-radius:6px;background:#fff"></div>
<div class="t" style="left:288px;top:848.37px;font-size:20px;line-height:20px;font-weight:700;color:#1d2038;letter-spacing:0px;font-family:'Liberation Sans',sans-serif;">Top 10 Security Configurations</div>
<div class="a" style="left:271px;top:888.5px;width:1100px;height:1.5px;background:#ececee"></div>
<div class="t" style="left:303px;top:903.65px;font-size:14px;line-height:14px;font-weight:700;color:#2a2a30;font-family:'Liberation Sans',sans-serif;">Configuration Name</div>
<svg class="a" style="left:1259px;top:900px" width="11" height="19" viewBox="0 0 11 19"><polygon points="5.5,1 9.5,8 1.5,8" fill="#c4c4c8"/><polygon points="5.5,18 9.5,11 1.5,11" fill="#c4c4c8"/></svg>
<div class="t" style="left:1286px;top:903.65px;font-size:14px;line-height:14px;font-weight:700;color:#2a2a30;font-family:'Liberation Sans',sans-serif;">Security Configuration</div>
<div class="a" style="left:271px;top:931.5px;width:1100px;height:1.5px;background:#e6e6e9"></div>
<div class="a" style="left:271px;top:933px;width:1100px;height:20px;background:#fafbfc"></div>
<svg class="a" style="left:302px;top:939px" width="16" height="16" viewBox="0 0 16 16" fill="none" stroke="#333" stroke-width="1.6"><path d="M7,3 H3 V13 H13 V9 M9,2.5 H13.5 V7 M13.5,2.5 L7.5,8.5"/></svg>
<div class="t" style="left:324.6px;top:940.47px;font-size:14.8px;line-height:14.8px;font-weight:400;color:#333;font-family:'Liberation Sans',sans-serif;">Enforce Least Privilege by Restricting Administrator Access</div>
<div class="t" style="left:1287.5px;top:941.15px;font-size:14px;line-height:14px;font-weight:400;color:#333;font-family:'Liberation Sans',sans-serif;">AWSIAM-User</div>
</div>
</div></div></body></html>
